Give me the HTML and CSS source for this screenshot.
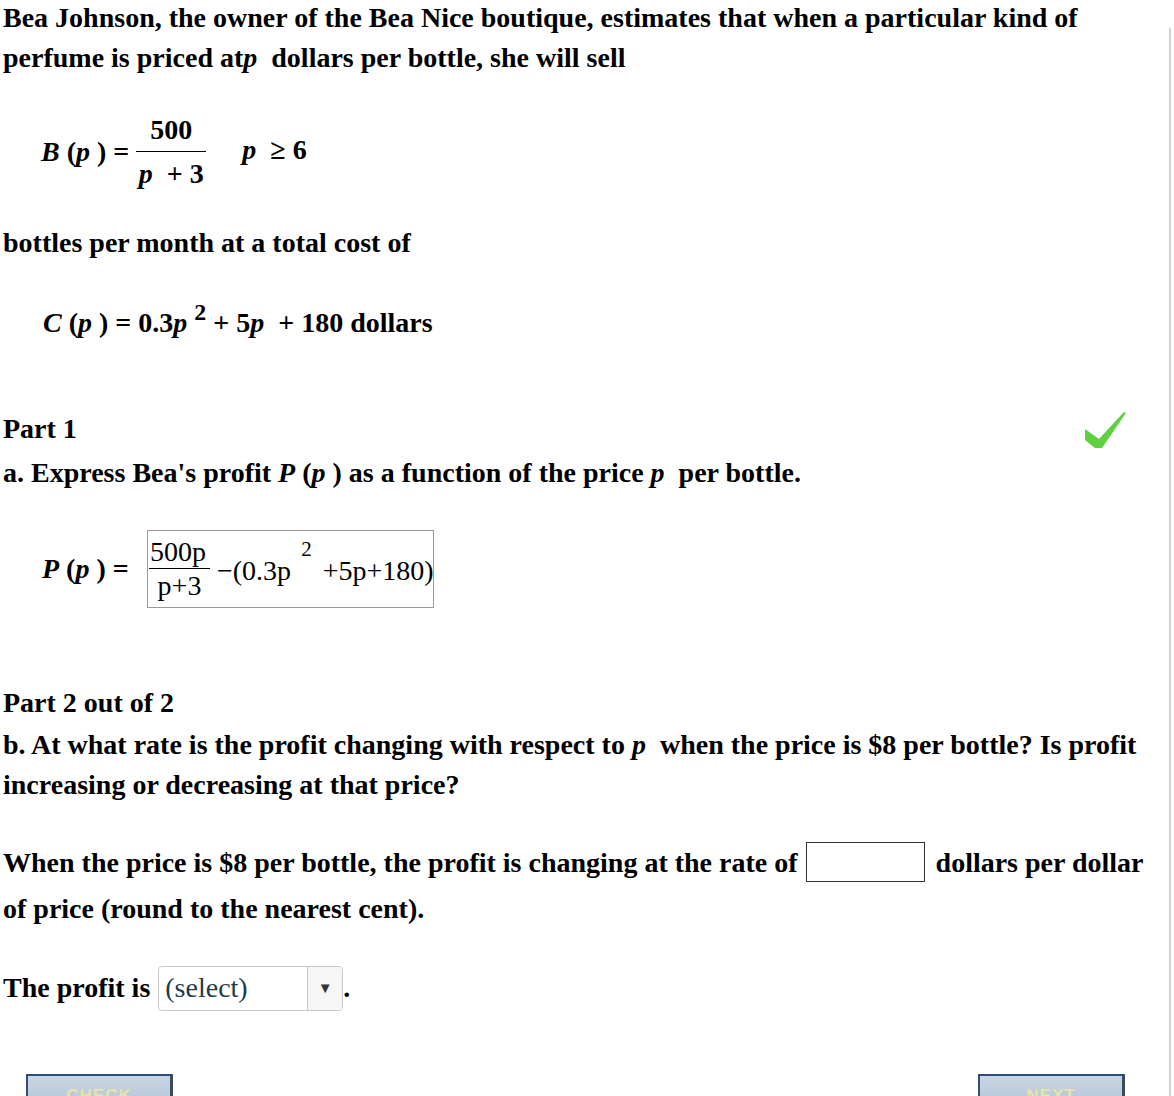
FILE: index.html
```html
<!DOCTYPE html>
<html>
<head>
<meta charset="utf-8">
<link rel="stylesheet" href="styles.css">
</head>
<body>
<div class="page">
  <div class="content">
    <p class="intro">Bea Johnson, the owner of the Bea Nice boutique, estimates that when a particular kind of perfume is priced at<i>p</i>&nbsp; dollars per bottle, she will sell</p>

    <div class="formula-b">
      <span class="lhs"><i>B</i> (<i>p</i> ) =</span>
      <span class="frac">
        <span class="num">500</span>
        <span class="den"><i>p</i> &nbsp;+ 3</span>
      </span>
      <span class="cond"><i>p</i> &nbsp;≥ 6</span>
    </div>

    <p class="line bottles">bottles per month at a total cost of</p>

    <div class="formula-c"><i>C</i> (<i>p</i> ) = 0.3<i>p</i> <sup>2</sup> + 5<i>p</i> &nbsp;+ 180 dollars</div>

    <div class="part-head">
      <span>Part 1</span>
      <svg class="check" width="44" height="42" viewBox="0 0 44 42">
        <path d="M1 18 L15 28 L18 37 L11 37 L1 29 Z" fill="#5fd13e"/>
        <path d="M11 37 L14 29 L40 1 L42 2 L18 37 Z" fill="#5fd13e"/>
      </svg>
    </div>
    <p class="line q-a">a. Express Bea's profit <i>P</i> (<i>p</i> ) as a function of the price <i>p</i> &nbsp;per bottle.</p>

    <div class="formula-p">
      <span class="lhs"><i>P</i> (<i>p</i> ) =</span>
      <span class="answer">
        <span class="afrac">
          <span class="anum">500p</span>
          <span class="aden">p+3</span>
        </span>
        <span class="arest">−(0.3p<sup class="asup">2</sup>+5p+180)</span>
      </span>
    </div>

    <p class="line part2">Part 2 out of 2</p>
    <p class="q-b">b. At what rate is the profit changing with respect to <i>p</i> &nbsp;when the price is $8 per bottle? Is profit increasing or decreasing at that price?</p>

    <p class="rate">When the price is $8 per bottle, the profit is changing at the rate of <span class="input"></span> dollars per dollar of price (round to the nearest cent).</p>

    <p class="profit">The profit is <span class="select"><span class="sel-text">(select)</span><span class="sel-arrow">▼</span></span>.</p>

    <div class="buttons">
      <span class="btn">CHECK</span>
      <span class="btn">NEXT</span>
    </div>
  </div>
  <div class="scrollbar"></div>
</div>
</body>
</html>
```

FILE: styles.css
```css
html, body {
  margin: 0;
  padding: 0;
  background: #fff;
}
body {
  font-family: "Liberation Serif", "Times New Roman", serif;
  font-weight: bold;
  font-size: 28px;
  color: #000;
  overflow: hidden;
  height: 1096px;
}
.page {
  display: flex;
  width: 1174px;
  height: 1096px;
}
.content {
  width: 1160px;
  padding-left: 3px;
}
.scrollbar {
  margin-left: auto;
  width: 3px;
  margin-top: 28px;
  border-left: 2px solid #d2d2d2;
  height: 1068px;
}
p { margin: 0; }
.intro {
  line-height: 40px;
  margin-top: -2px;
}
.formula-b {
  display: flex;
  align-items: center;
  margin-top: 37px;
  margin-left: 38px;
}
.formula-b .lhs { margin-right: 7px; }
.frac {
  display: inline-flex;
  flex-direction: column;
  align-items: center;
  width: 70px;
}
.frac .num {
  line-height: 30px;
  border-bottom: 1.5px solid #000;
  width: 100%;
  text-align: center;
  padding-bottom: 6px;
}
.frac .den {
  line-height: 30px;
  padding-top: 7px;
}
.cond { margin-left: 36px; margin-top: -4px; }
.line { line-height: 40px; }
.bottles { margin-top: 34px; }
.formula-c {
  margin-top: 40px;
  margin-left: 40px;
  line-height: 40px;
}
.formula-c sup {
  font-size: 24px;
  vertical-align: 12px;
  line-height: 0;
}
.part-head {
  display: flex;
  justify-content: space-between;
  align-items: flex-start;
  margin-top: 66px;
  line-height: 40px;
  width: 1125px;
  height: 40px;
}
.check { margin-top: 2px; }
.q-a { margin-top: 4px; }
.formula-p {
  display: flex;
  align-items: center;
  margin-top: 37px;
  margin-left: 39px;
}
.formula-p .lhs { width: 105px; }
.answer {
  display: inline-flex;
  align-items: center;
  border: 1.5px solid #9a9a9a;
  height: 78px;
  width: 287px;
  box-sizing: border-box;
  font-weight: normal;
  padding-left: 1px;
}
.afrac {
  display: inline-flex;
  flex-direction: column;
  align-items: center;
}
.anum {
  line-height: 26px;
  border-bottom: 1.5px solid #000;
  padding: 0 4px 3px 1px;
}
.aden { line-height: 26px; padding-top: 4px; }
.arest { margin-left: 7px; margin-top: -2px; white-space: nowrap; }
.asup {
  font-size: 21px;
  vertical-align: 24px;
  line-height: 0;
  margin-left: 10px;
  margin-right: 11px;
}
.part2 { margin-top: 75px; }
.q-b {
  line-height: 40px;
  margin-top: 2px;
}
.rate {
  margin-top: 35px;
  line-height: 46px;
}
.input {
  display: inline-block;
  width: 117px;
  height: 38px;
  border: 1px solid #333;
  vertical-align: -10px;
  margin: 0 4px 0 1px;
  background: #fff;
}
.profit {
  margin-top: 33px;
  line-height: 46px;
}
.select {
  display: inline-flex;
  vertical-align: baseline;
  width: 185px;
  height: 45px;
  box-sizing: border-box;
  border: 1.5px solid #c9c9c9;
  border-radius: 4px;
  font-weight: normal;
  margin-left: 1px;
  overflow: hidden;
}
.sel-text {
  flex: 1;
  color: #1d3b48;
  line-height: 42px;
  padding-left: 6px;
}
.sel-arrow {
  width: 34px;
  border-left: 1.5px solid #c9c9c9;
  background: #f6f6f6;
  font-size: 15px;
  color: #333;
  text-align: center;
  line-height: 42px;
}
.buttons {
  display: flex;
  justify-content: space-between;
  width: 1099px;
  margin-left: 23px;
  margin-top: 63px;
}
.btn {
  display: block;
  width: 147px;
  height: 34px;
  box-sizing: border-box;
  border-top: 2px solid #2e4c7c;
  border-left: 2px solid #2e4c7c;
  border-right: 3px solid #3c4a5c;
  background: linear-gradient(#c9d6e3, #b3c4d6);
  color: #e9e3a6;
  font-family: "Liberation Sans", Arial, sans-serif;
  font-size: 17px;
  text-align: center;
  line-height: 40px;
  letter-spacing: 1px;
}
```
